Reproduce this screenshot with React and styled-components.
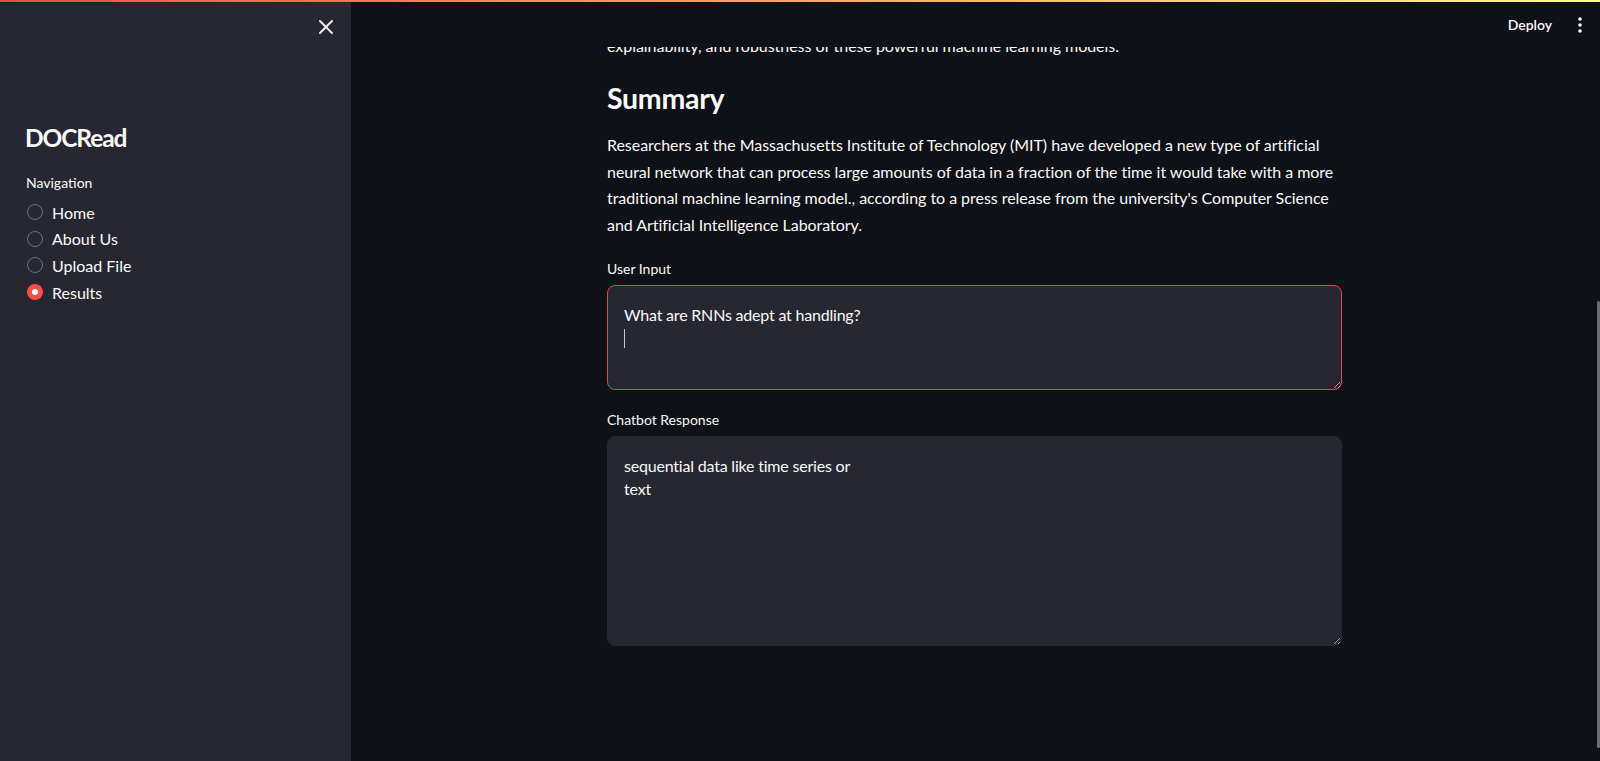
import React from 'react';
import styled, { createGlobalStyle } from 'styled-components';
import { X } from 'lucide-react';

const GlobalStyle = createGlobalStyle`
  html, body {
    margin: 0;
    padding: 0;
    background: #0e1117;
    overflow: hidden;
  }
  body {
    font-family: Lato, "Noto Sans", sans-serif;
    color: #fafafa;
  }
  * {
    box-sizing: border-box;
  }
`;

const navItems = [
  { name: 'Home', key: 1 },
  { name: 'About Us', key: 2 },
  { name: 'Upload File', key: 3 },
  { name: 'Results', key: 4 },
];

const summary =
  "Researchers at the Massachusetts Institute of Technology (MIT) have developed a new type of artificial neural network that can process large amounts of data in a fraction of the time it would take with a more traditional machine learning model., according to a press release from the university's Computer Science and Artificial Intelligence Laboratory.";

const App = () => {
  return (
    <>
      <GlobalStyle />
      <Decoration />
      <Shell>
        <Sidebar>
          <SidebarTop>
            <CloseButton>
              <X size={24} strokeWidth={2} />
            </CloseButton>
          </SidebarTop>
          <SidebarBody>
            <AppTitle>DOCRead</AppTitle>
            <GroupLabel>Navigation</GroupLabel>
            <RadioList>
              {navItems.map((item) => (
                <RadioRow key={item.key}>
                  <RadioDot $checked={item.name === 'Results'} />
                  {item.name}
                </RadioRow>
              ))}
            </RadioList>
          </SidebarBody>
        </Sidebar>

        <Main>
          <Header>
            <DeployButton>Deploy</DeployButton>
            <MenuButton>
              <svg width="4" height="16" viewBox="0 0 4 16">
                <circle cx="2" cy="2" r="1.8" fill="#fafafa" />
                <circle cx="2" cy="8" r="1.8" fill="#fafafa" />
                <circle cx="2" cy="14" r="1.8" fill="#fafafa" />
              </svg>
            </MenuButton>
          </Header>

          <Block>
            <Paragraph>
              explainability, and robustness of these powerful machine learning models.
            </Paragraph>
            <Heading>Summary</Heading>
            <Paragraph>{summary}</Paragraph>

            <FieldLabel $top={21}>User Input</FieldLabel>
            <TextBox $height={105} $focused>
              What are RNNs adept at handling?
              <Caret />
            </TextBox>

            <FieldLabel $top={20}>Chatbot Response</FieldLabel>
            <TextBox $height={210}>
              sequential data like time series or
              <br />
              text
            </TextBox>
          </Block>

          <ScrollThumb />
        </Main>
      </Shell>
    </>
  );
};

const Decoration = styled.div`
  position: fixed;
  top: 0;
  left: 0;
  right: 0;
  height: 2px;
  background: linear-gradient(90deg, #ff4b4b, #fffd80);
  z-index: 10;
`;

const Shell = styled.div`
  display: flex;
  height: 100vh;
`;

const Sidebar = styled.aside`
  width: 351px;
  flex-shrink: 0;
  background: #262730;
  display: flex;
  flex-direction: column;
`;

const SidebarTop = styled.div`
  height: 53px;
  display: flex;
  align-items: center;
  justify-content: flex-end;
  padding-right: 13px;
`;

const CloseButton = styled.div`
  width: 24px;
  height: 24px;
  color: #f0f0f2;
  display: flex;
  align-items: center;
  justify-content: center;
`;

const SidebarBody = styled.div`
  padding: 70px 25px 0;
`;

const AppTitle = styled.h1`
  margin: 0;
  font-size: 24.5px;
  font-weight: 700;
  line-height: 30px;
  letter-spacing: -1.1px;
`;

const GroupLabel = styled.div`
  margin-top: 20px;
  font-size: 14px;
  line-height: 20px;
  padding-left: 1px;
`;

const RadioList = styled.ul`
  list-style: none;
  margin: 6px 0 0;
  padding: 0;
`;

const RadioRow = styled.li`
  display: flex;
  align-items: center;
  gap: 9px;
  height: 26.6px;
  font-size: 16px;
  padding-left: 2px;
`;

const RadioDot = styled.span`
  width: 16px;
  height: 16px;
  border-radius: 50%;
  flex-shrink: 0;
  border: ${(p) => (p.$checked ? '5px solid #ff4b4b' : '1px solid #6f7079')};
  background: ${(p) => (p.$checked ? '#ffffff' : 'transparent')};
`;

const Main = styled.main`
  flex: 1;
  position: relative;
  overflow: hidden;
  padding-right: 2px;
`;

const Header = styled.header`
  position: absolute;
  top: 0;
  left: 0;
  right: 0;
  height: 47px;
  background: #0e1117;
  display: flex;
  align-items: center;
  justify-content: flex-end;
  padding: 2px 14px 0 0;
  z-index: 5;
`;

const DeployButton = styled.div`
  font-size: 14px;
  font-weight: 600;
  margin-right: 22px;
  color: #fafafa;
`;

const MenuButton = styled.div`
  width: 12px;
  display: flex;
  justify-content: center;
`;

const Block = styled.div`
  width: 735px;
  margin: 0 auto;
  padding-top: 33px;
`;

const Paragraph = styled.p`
  margin: 0;
  font-size: 16px;
  line-height: 26.5px;
  letter-spacing: -0.04px;
`;

const Heading = styled.h2`
  margin: 22px 0 17px;
  font-size: 28.5px;
  font-weight: 700;
  line-height: 33.6px;
  letter-spacing: -0.3px;
`;

const FieldLabel = styled.label`
  display: block;
  margin-top: ${(p) => p.$top}px;
  margin-bottom: 6px;
  font-size: 14px;
  line-height: 20px;
`;

const TextBox = styled.div`
  height: ${(p) => p.$height}px;
  background: #262730;
  border: 1px solid ${(p) => (p.$focused ? '#e0474f' : '#262730')};
  border-radius: 8px;
  padding: 18px 16px 16px;
  font-size: 16px;
  line-height: 22.4px;
  letter-spacing: -0.2px;
  color: #fafafa;
  resize: vertical;
  overflow: hidden;
  color-scheme: dark;
`;

const Caret = styled.span`
  display: block;
  width: 1px;
  height: 19px;
  margin-top: 2px;
  background: #c8c8cc;
`;

const ScrollThumb = styled.div`
  position: absolute;
  right: 0;
  top: 301px;
  width: 3px;
  height: 447px;
  border-radius: 2px;
  background: #6e6e72;
`;

export default App;
